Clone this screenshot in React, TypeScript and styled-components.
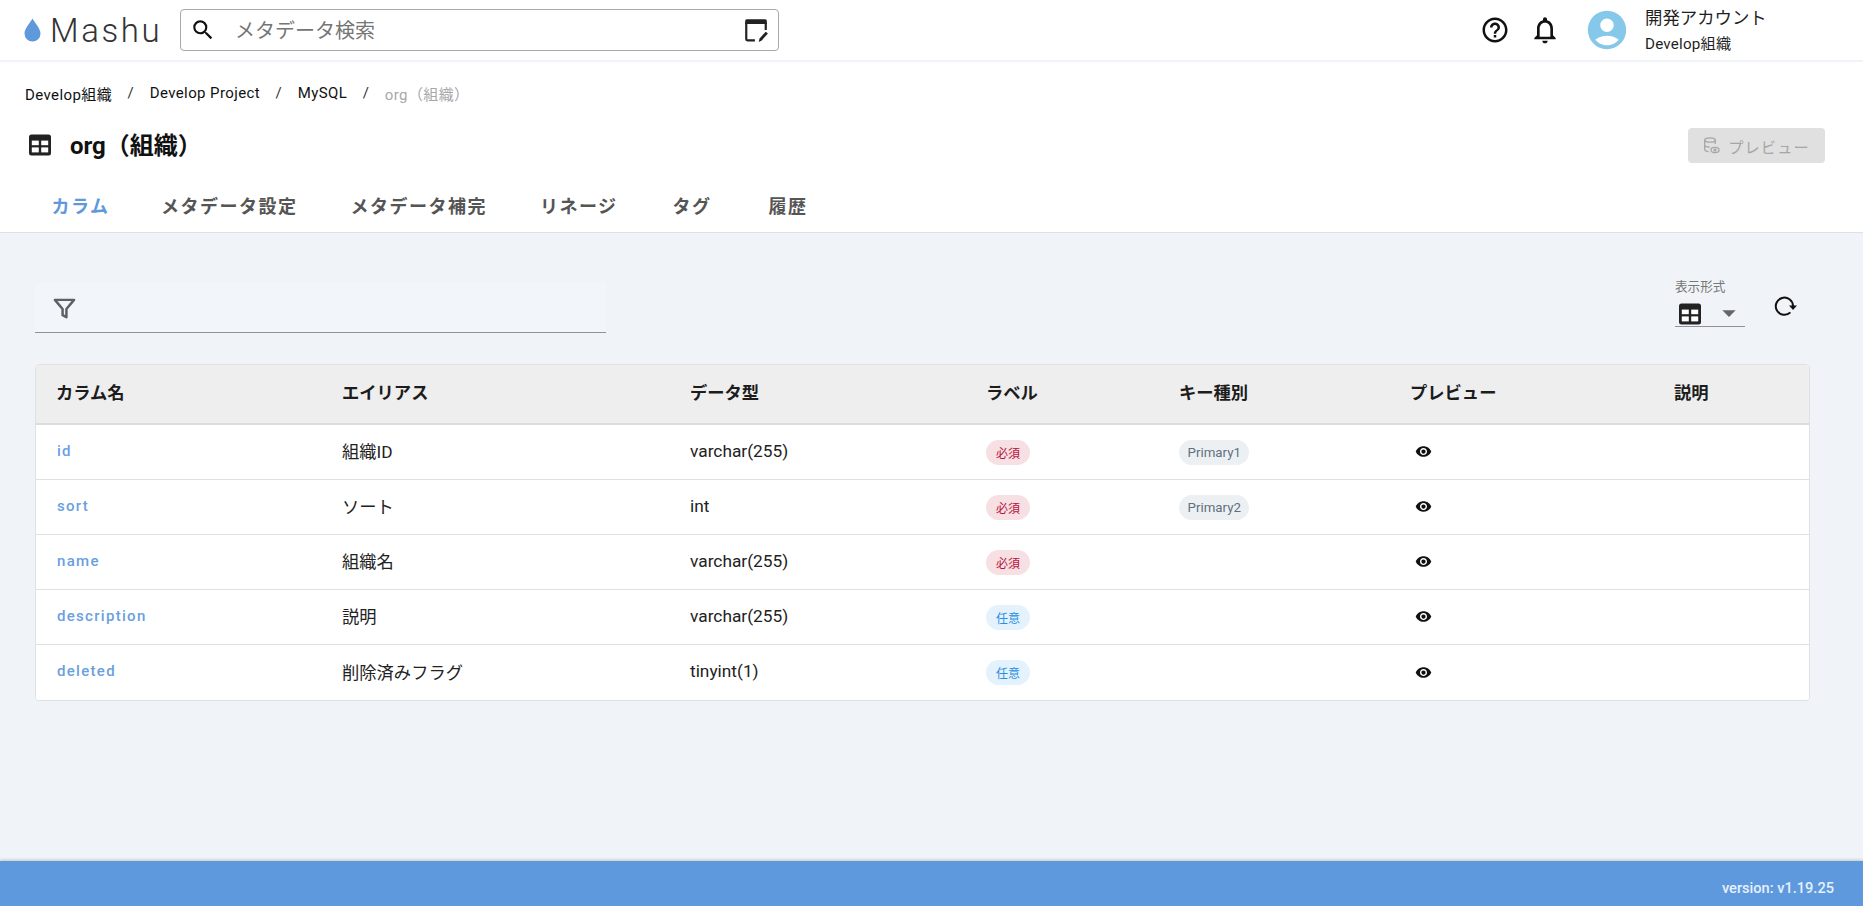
import React from "react";
import styled, { createGlobalStyle } from "styled-components";
import { MdSearch, MdHelpOutline, MdNotificationsNone, MdAccountCircle, MdVisibility, MdArrowDropDown } from "react-icons/md";
import { FiFilter } from "react-icons/fi";

const GlobalStyle = createGlobalStyle`
    html, body, #root { height: 100%; }
    body {
        margin: 0;
        background: #f0f4f8;
        color: #1f1f1f;
        font-family: Roboto, "Noto Sans CJK JP", sans-serif;
    }
    * { box-sizing: border-box; }
`;

const Page = styled.div`
    height: 906px;
    display: flex;
    flex-direction: column;
`;

const Header = styled.header`
    height: 62px;
    flex: none;
    display: flex;
    align-items: center;
    background: #fff;
    border-bottom: 2px solid #f0f4f8;
    padding: 0 0 0 24px;
`;

const Logo = styled.div`
    width: 156px;
    flex: none;
    display: flex;
    align-items: center;
    gap: 9px;
    color: #333;
    font-size: 33px;
    font-weight: 300;
    letter-spacing: 2.6px;
`;

const SearchBox = styled.div`
    width: 599px;
    height: 42px;
    display: flex;
    align-items: center;
    border: 1px solid #a8a8a8;
    border-radius: 4px;
    padding: 0 9px 0 9px;
    font-size: 20px;
    color: #757575;
    svg { flex: none; color: #111; }
`;

const SearchText = styled.span`
    flex: 1;
    padding-left: 19px;
    margin-top: -1px;
`;

const HeaderRight = styled.div`
    margin-left: auto;
    display: flex;
    align-items: center;
`;

const AccountText = styled.div`
    width: 218px;
    margin-left: 15px;
    display: flex;
    flex-direction: column;
    gap: 7px;
`;

const AccountName = styled.div`
    font-size: 17.4px;
    line-height: 20px;
`;

const AccountOrg = styled.div`
    font-size: 15.2px;
    line-height: 18px;
    letter-spacing: 0.2px;
`;

const TopPanel = styled.div`
    flex: none;
    height: 171px;
    background: #fff;
    border-bottom: 1px solid #e0e0e0;
    padding: 20px 38px 0 25px;
`;

const Crumbs = styled.nav`
    display: flex;
    align-items: center;
    height: 22px;
    font-size: 15px;
    letter-spacing: 0.4px;
    color: #111;
`;

const Sep = styled.span`
    width: 37.6px;
    text-align: center;
    color: #333;
`;

const CrumbNow = styled.span`
    color: #a8a8a8;
`;

const TitleRow = styled.div`
    height: 36px;
    margin-top: 22px;
    display: flex;
    align-items: center;
    justify-content: space-between;
`;

const Title = styled.h1`
    margin: -2px 0 0;
    display: flex;
    align-items: center;
    gap: 18px;
    font-size: 24px;
    font-weight: 700;
    color: #111;
    padding-left: 3px;
    svg { margin-top: 4px; }
`;

const PreviewButton = styled.button`
    width: 137px;
    height: 35px;
    margin-top: 3px;
    border: 0;
    border-radius: 4px;
    background: #e0e0e0;
    color: #a6a6a6;
    display: flex;
    align-items: center;
    justify-content: center;
    gap: 8px;
    font-family: inherit;
    font-size: 15.2px;
    letter-spacing: 1.1px;
`;

const Tabs = styled.div`
    display: flex;
    margin-top: 33px;
`;

const Tab = styled.div<{ $active?: boolean }>`
    min-width: 96px;
    padding: 0 26.5px;
    text-align: center;
    font-size: 18px;
    line-height: 24px;
    font-weight: 700;
    letter-spacing: 1.5px;
    color: ${(p) => (p.$active ? "#5f99dc" : "#555")};
    &:first-child { padding-right: 25px; }
`;

const Main = styled.main`
    flex: 1;
    padding: 0 53px 0 35px;
`;

const Controls = styled.div`
    height: 131px;
    display: flex;
    justify-content: space-between;
    padding-top: 50px;
`;

const FilterField = styled.div`
    width: 571px;
    height: 50px;
    background: #f2f6fa;
    border-bottom: 1px solid #8f9297;
    padding: 14px 0 0 18px;
    color: #5d6065;
`;

const ViewControls = styled.div`
    display: flex;
    gap: 28px;
    margin-right: 11px;
`;

const ViewSelect = styled.div`
    width: 70px;
    height: 48px;
    margin-top: -4px;
    border-bottom: 1px solid #8f9297;
`;

const ViewLabel = styled.div`
    font-size: 12.6px;
    line-height: 16px;
    color: #777;
`;

const ViewValue = styled.div`
    display: flex;
    align-items: center;
    justify-content: space-between;
    padding: 4px 0 0 3px;
    color: #666;
`;

const RefreshIcon = styled.div`
    padding-top: 10px;
    color: #111;
    line-height: 0;
`;

const Table = styled.div`
    border: 1px solid #e0e0e0;
    border-radius: 4px;
    background: #fff;
    overflow: hidden;
`;

const Row = styled.div<{ $head?: boolean }>`
    display: grid;
    grid-template-columns: 286px 348px 296px 193px 231px 264px 1fr;
    align-items: center;
    height: ${(p) => (p.$head ? "60px" : "55px")};
    padding: ${(p) => (p.$head ? "0 0 5px 20px" : "0 0 3px 20px")};
    background: ${(p) => (p.$head ? "#eeeeee" : "#fff")};
    border-bottom: ${(p) => (p.$head ? "2px solid #dcdcdc" : "1px solid #e0e0e0")};
    font-size: 17.3px;
    font-weight: ${(p) => (p.$head ? 700 : 400)};
    color: ${(p) => (p.$head ? "#1c1c1c" : "#222")};
    &:last-child { border-bottom: 0; }
`;

const NameCell = styled.div`
    font-size: 15px;
    font-weight: 500;
    letter-spacing: 1.3px;
    color: #6a9fdf;
    padding-left: 1px;
`;

const Chip = styled.span<{ $kind: "required" | "optional" | "key" }>`
    display: inline-flex;
    align-items: center;
    justify-content: center;
    height: 25px;
    border-radius: 12.5px;
    padding: 0 ${(p) => (p.$kind === "key" ? "8.5px" : "10px")};
    font-size: ${(p) => (p.$kind === "key" ? "13.3px" : "12px")};
    background: ${(p) => (p.$kind === "required" ? "#f6e0e4" : p.$kind === "optional" ? "#e3f2fd" : "#edf0f3")};
    color: ${(p) => (p.$kind === "required" ? "#b8123c" : p.$kind === "optional" ? "#2a8fe0" : "#5f7080")};
`;

const ChipCell = styled.div`
    padding-top: 3px;
`;

const EyeCell = styled.div`
    padding: 2px 0 0 5px;
    line-height: 0;
    color: #111;
`;

const Footer = styled.footer`
    flex: none;
    height: 45px;
    background: #5f99dd;
    box-shadow: 0 -1px 3px rgba(0, 0, 0, 0.2);
    display: flex;
    align-items: center;
    justify-content: flex-end;
    padding: 8px 29px 0 0;
    font-size: 14.6px;
    font-weight: 500;
    color: #e6f0fc;
`;

const Drop = () => (
    <svg width="17" height="24" viewBox="0 0 17 24">
        <path d="M8.5 0.5C6 5 0.5 10.5 0.5 15.5a8 8 0 0 0 16 0C16.5 10.5 11 5 8.5 0.5z" fill="#5f99dc" />
    </svg>
);

const NoteEdit = () => (
    <svg width="26" height="26" viewBox="0 0 24 24" fill="none">
        <path d="M2 3.5A1.5 1.5 0 0 1 3.5 2h17A1.5 1.5 0 0 1 22 3.5V6.5H2z" fill="#222" />
        <path d="M3 5v15a1.5 1.5 0 0 0 1.5 1.5H11M21 5v7" stroke="#222" strokeWidth="2" />
        <path d="M14.5 23l.8-3.2 5.7-6.3 2 1.8-5.7 6.3z" fill="#222" />
    </svg>
);

const TableIcon = ({ size }: { size: number }) => (
    <svg width={size} height={size} viewBox="0 0 24 24">
        <rect x="1" y="1.5" width="22" height="21" rx="2.5" fill="#222" />
        <rect x="3.8" y="7.6" width="7" height="4.6" fill="#fff" />
        <rect x="13.2" y="7.6" width="7" height="4.6" fill="#fff" />
        <rect x="3.8" y="14.4" width="7" height="5" fill="#fff" />
        <rect x="13.2" y="14.4" width="7" height="5" fill="#fff" />
    </svg>
);

const Reload = () => (
    <svg width="26" height="26" viewBox="0 0 26 26" fill="none">
        <path d="M17.4 19.4A8.6 8.6 0 1 1 20 13" stroke="#111" strokeWidth="2" />
        <path d="M16 12.5h8l-4 4.5z" fill="#111" />
    </svg>
);

const DbEye = () => (
    <svg width="17" height="17" viewBox="0 0 17 17" fill="none" stroke="#a6a6a6" strokeWidth="1.3">
        <ellipse cx="7" cy="3" rx="5.3" ry="2.2" />
        <path d="M1.7 3v9.5c0 1.1 1.7 1.9 4 2.1M12.3 3v4M1.7 8c0 1.2 2.3 2.1 5 2.1" />
        <ellipse cx="12" cy="13" rx="4" ry="2.6" />
        <circle cx="12" cy="13" r="0.9" fill="#a6a6a6" />
    </svg>
);

type Column = {
    name: string;
    alias: string;
    type: string;
    label: "required" | "optional";
    keyName?: string;
};

const columns: Column[] = [
    { name: "id", alias: "組織ID", type: "varchar(255)", label: "required", keyName: "Primary1" },
    { name: "sort", alias: "ソート", type: "int", label: "required", keyName: "Primary2" },
    { name: "name", alias: "組織名", type: "varchar(255)", label: "required" },
    { name: "description", alias: "説明", type: "varchar(255)", label: "optional" },
    { name: "deleted", alias: "削除済みフラグ", type: "tinyint(1)", label: "optional" },
];

const tabs = ["カラム", "メタデータ設定", "メタデータ補完", "リネージ", "タグ", "履歴"];

export default function App() {
    return (
        <Page>
            <GlobalStyle />
            <Header>
                <Logo>
                    <Drop />
                    Mashu
                </Logo>
                <SearchBox>
                    <MdSearch size={26} />
                    <SearchText>メタデータ検索</SearchText>
                    <NoteEdit />
                </SearchBox>
                <HeaderRight>
                    <MdHelpOutline size={30} color="#111" />
                    <MdNotificationsNone size={32} color="#111" style={{ marginLeft: 19 }} />
                    <MdAccountCircle size={46} color="#85c8ea" style={{ marginLeft: 23 }} />
                    <AccountText>
                        <AccountName>開発アカウント</AccountName>
                        <AccountOrg>Develop組織</AccountOrg>
                    </AccountText>
                </HeaderRight>
            </Header>
            <TopPanel>
                <Crumbs>
                    <span>Develop組織</span>
                    <Sep>/</Sep>
                    <span>Develop Project</span>
                    <Sep>/</Sep>
                    <span>MySQL</span>
                    <Sep>/</Sep>
                    <CrumbNow>org（組織）</CrumbNow>
                </Crumbs>
                <TitleRow>
                    <Title>
                        <TableIcon size={24} />
                        org（組織）
                    </Title>
                    <PreviewButton>
                        <DbEye />
                        プレビュー
                    </PreviewButton>
                </TitleRow>
                <Tabs>
                    {tabs.map((t, i) => (
                        <Tab key={t} $active={i === 0}>{t}</Tab>
                    ))}
                </Tabs>
            </TopPanel>
            <Main>
                <Controls>
                    <FilterField>
                        <FiFilter size={23} strokeWidth={2.6} />
                    </FilterField>
                    <ViewControls>
                        <ViewSelect>
                            <ViewLabel>表示形式</ViewLabel>
                            <ViewValue>
                                <TableIcon size={24} />
                                <MdArrowDropDown size={32} style={{ marginTop: -2 }} />
                            </ViewValue>
                        </ViewSelect>
                        <RefreshIcon>
                            <Reload />
                        </RefreshIcon>
                    </ViewControls>
                </Controls>
                <Table>
                    <Row $head>
                        <div>カラム名</div>
                        <div>エイリアス</div>
                        <div>データ型</div>
                        <div>ラベル</div>
                        <div>キー種別</div>
                        <div>プレビュー</div>
                        <div>説明</div>
                    </Row>
                    {columns.map((c) => (
                        <Row key={c.name}>
                            <NameCell>{c.name}</NameCell>
                            <div>{c.alias}</div>
                            <div>{c.type}</div>
                            <ChipCell>
                                <Chip $kind={c.label}>{c.label === "required" ? "必須" : "任意"}</Chip>
                            </ChipCell>
                            <ChipCell>{c.keyName && <Chip $kind="key">{c.keyName}</Chip>}</ChipCell>
                            <EyeCell>
                                <MdVisibility size={17} />
                            </EyeCell>
                            <div />
                        </Row>
                    ))}
                </Table>
            </Main>
            <Footer>version: v1.19.25</Footer>
        </Page>
    );
}
